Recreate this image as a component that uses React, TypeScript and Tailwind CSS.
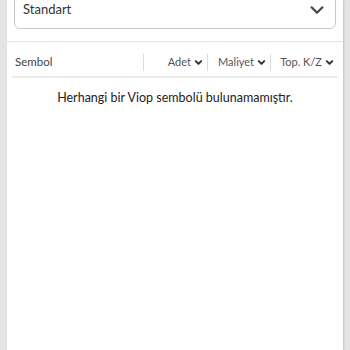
import React from "react";

const Chevron = ({ className, weight = 2 }: { className?: string; weight?: number }) => (
  <svg viewBox="0 0 10 10" className={className} fill="none" stroke="currentColor" strokeWidth={weight} strokeLinecap="round" strokeLinejoin="round">
    <path d="M2 3.5 L5 6.5 L8 3.5" />
  </svg>
);

const HeaderCell = ({ label, width }: { label: string; width: string }) => (
  <div className={`${width} h-[17px] flex items-center justify-end gap-[3px] pr-[4px] border-l border-[#dcdcdc] text-[11px] text-[#555]`}>
    <span>{label}</span>
    <Chevron className="w-[9px] h-[9px] text-[#333]" weight={2.2} />
  </div>
);

const App = () => {
  return (
    <div
      className="w-[350px] h-[350px] overflow-hidden flex bg-[#e4e4e4] pl-[7px] pr-[7px]"
      style={{ fontFamily: "Lato, 'Noto Sans', sans-serif" }}
    >
      <div className="flex-1 bg-white flex flex-col shadow-[1px_0_2px_rgba(0,0,0,0.15)]">
        <div className="h-[42px] border-b border-[#e2e2e2] px-[7px]">
          <div className="-mt-[11px] h-[40px] border border-[#c8c8c8] rounded-[6px] flex items-end justify-between pl-[8px] pr-[9px] pb-[9px]">
            <span className="text-[13px] text-[#333]">Standart</span>
            <Chevron className="w-[18px] h-[18px] text-[#444]" weight={1.2} />
          </div>
        </div>
        <div className="mx-[5px] h-[36px] pt-[6px] border-b-2 border-[#ececec] flex items-center">
          <div className="w-[131px] pl-[3px] text-[11.5px] text-[#444]">Sembol</div>
          <HeaderCell label="Adet" width="w-[64px]" />
          <HeaderCell label="Maliyet" width="w-[63px]" />
          <HeaderCell label="Top. K/Z" width="flex-1" />
        </div>
        <div className="pt-[11px] text-center text-[12.5px] text-[#222]">
          Herhangi bir Viop sembolü bulunamamıştır.
        </div>
      </div>
    </div>
  );
};

export default App;
